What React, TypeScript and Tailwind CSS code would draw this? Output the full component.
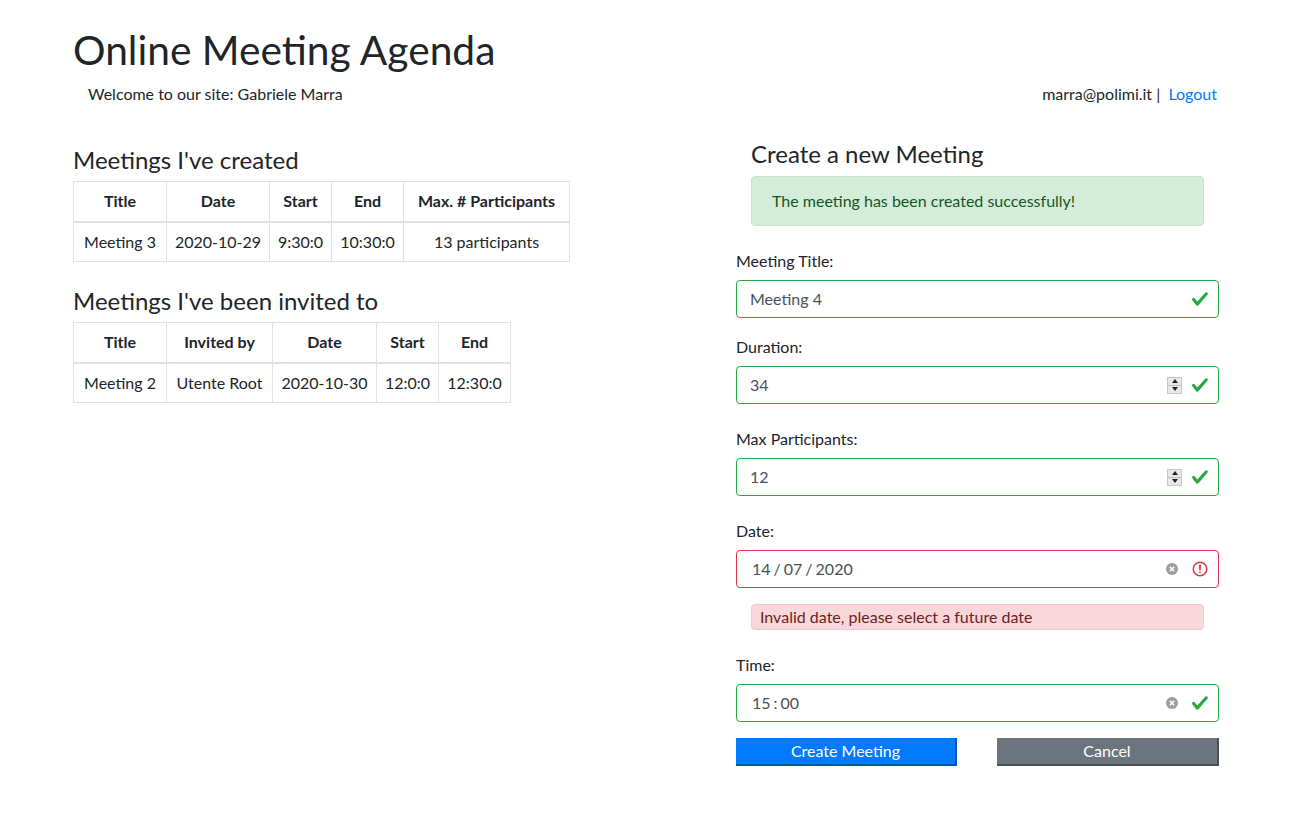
import React from 'react';

const font = { fontFamily: 'Lato, "Open Sans", sans-serif' };

function CheckIcon() {
  return (
    <svg width="18" height="18" viewBox="0 0 8 8" className="shrink-0">
      <path
        fill="#28a745"
        d="M2.3 6.73L.6 4.53c-.4-1.04.46-1.4 1.1-.8l1.1 1.4 3.4-3.8c.6-.63 1.6-.27 1.2.7l-4 4.6c-.43.5-.8.4-1.1.1z"
      />
    </svg>
  );
}

function InvalidIcon() {
  return (
    <svg width="18" height="18" viewBox="0 0 12 12" fill="none" stroke="#dc3545" className="shrink-0">
      <circle cx="6" cy="6" r="4.5" />
      <path strokeLinejoin="round" d="M5.8 3.6h.4L6 6.5z" />
      <circle cx="6" cy="8.2" r=".6" fill="#dc3545" stroke="none" />
    </svg>
  );
}

function ClearIcon() {
  return (
    <svg width="12" height="12" viewBox="0 0 12 12" className="shrink-0">
      <circle cx="6" cy="6" r="6" fill="#9e9e9e" />
      <path d="M3.8 3.8l4.4 4.4M8.2 3.8l-4.4 4.4" stroke="#fff" strokeWidth="1.6" />
    </svg>
  );
}

function Spinner() {
  return (
    <div className="flex flex-col w-[15px] h-[17px] border border-[#c8c8c8] bg-[#e8e8e8] shrink-0">
      <div className="flex-1 flex items-center justify-center border-b border-[#bdbdbd]">
        <div className="w-0 h-0 border-l-[3px] border-r-[3px] border-b-[4px] border-l-transparent border-r-transparent border-b-[#222]" />
      </div>
      <div className="flex-1 flex items-center justify-center">
        <div className="w-0 h-0 border-l-[3px] border-r-[3px] border-t-[4px] border-l-transparent border-r-transparent border-t-[#222]" />
      </div>
    </div>
  );
}

type FieldProps = {
  label: string;
  value: React.ReactNode;
  invalid?: boolean;
  spinner?: boolean;
  clear?: boolean;
  textPad?: string;
  mt: string;
};

function Field({ label, value, invalid, spinner, clear, textPad = 'pl-[13px]', mt }: FieldProps) {
  return (
    <div className={mt}>
      <label className="block text-base leading-6 text-[#212529]">{label}</label>
      <div
        className={`mt-[7px] h-[38px] rounded border flex items-center pr-[9px] ${textPad} ${
          invalid ? 'border-[#dc3545]' : 'border-[#28a745]'
        }`}
      >
        <div className="flex-1 flex text-base text-[#495057]">{value}</div>
        {spinner && (
          <div className="mr-[9px]">
            <Spinner />
          </div>
        )}
        {clear && (
          <div className="mr-[13px]">
            <ClearIcon />
          </div>
        )}
        {invalid ? <InvalidIcon /> : <CheckIcon />}
      </div>
    </div>
  );
}

// date / time inputs show their segments with tight separators
function Segments({ parts }: { parts: string[] }) {
  return (
    <div className="flex gap-[1px]">
      {parts.map((p, i) => (
        <span key={i} className={p === '/' || p === ':' ? 'px-[2px]' : ''}>
          {p}
        </span>
      ))}
    </div>
  );
}

const th = 'border border-[#dee2e6] border-b-2 font-bold text-center px-1 h-10 whitespace-nowrap';
const td = 'border border-[#dee2e6] text-center px-1 h-10 font-normal whitespace-nowrap';

export default function App() {
  return (
    <div className="min-h-[826px] bg-white text-[#212529]" style={font}>
      <div className="pl-[73px] pr-[88px] pt-[26px]">
        <h1 className="text-[40.7px] leading-[48px] font-normal">Online Meeting Agenda</h1>
        <div className="flex justify-between items-center mt-[8px] h-6 text-base">
          <span className="pl-[15px]">Welcome to our site: Gabriele Marra</span>
          <span className="pr-[2px]">
            marra@polimi.it |&nbsp;&nbsp;<a className="text-[#007bff]">Logout</a>
          </span>
        </div>

        <div className="flex mt-[35px]">
          {/* left column */}
          <div className="w-[663px]">
            <h4 className="text-2xl leading-[29px] mt-[4px]">Meetings I've created</h4>
            <table className="mt-[7px] border-collapse text-base">
              <thead>
                <tr>
                  <th className={`${th} w-[93px]`}>Title</th>
                  <th className={`${th} w-[103px]`}>Date</th>
                  <th className={`${th} w-[62px]`}>Start</th>
                  <th className={`${th} w-[72px]`}>End</th>
                  <th className={`${th} w-[166px]`}>Max. # Participants</th>
                </tr>
              </thead>
              <tbody>
                <tr>
                  <td className={td}>Meeting 3</td>
                  <td className={td}>2020-10-29</td>
                  <td className={td}>9:30:0</td>
                  <td className={td}>10:30:0</td>
                  <td className={td}>13 participants</td>
                </tr>
              </tbody>
            </table>

            <h4 className="text-2xl leading-[29px] mt-[24px]">Meetings I've been invited to</h4>
            <table className="mt-[7px] border-collapse text-base">
              <thead>
                <tr>
                  <th className={`${th} w-[93px]`}>Title</th>
                  <th className={`${th} w-[106px]`}>Invited by</th>
                  <th className={`${th} w-[104px]`}>Date</th>
                  <th className={`${th} w-[62px]`}>Start</th>
                  <th className={`${th} w-[72px]`}>End</th>
                </tr>
              </thead>
              <tbody>
                <tr>
                  <td className={td}>Meeting 2</td>
                  <td className={td}>Utente Root</td>
                  <td className={td}>2020-10-30</td>
                  <td className={td}>12:0:0</td>
                  <td className={td}>12:30:0</td>
                </tr>
              </tbody>
            </table>
          </div>

          {/* right column */}
          <div className="w-[483px]">
            <div className="px-[15px]">
              <h4 className="text-2xl leading-[29px] -mt-[2px]">Create a new Meeting</h4>
              <div className="mt-[8px] h-[50px] flex items-center px-5 rounded border border-[#c3e6cb] bg-[#d4edda] text-[#155724] text-base">
                The meeting has been created successfully!
              </div>
            </div>

            <Field mt="mt-[23px]" label="Meeting Title:" value="Meeting 4" />
            <Field mt="mt-[17px]" label="Duration:" value="34" spinner />
            <Field mt="mt-[23px]" label="Max Participants:" value="12" spinner />
            <Field
              mt="mt-[23px]"
              label="Date:"
              value={<Segments parts={['14', '/', '07', '/', '2020']} />}
              invalid
              clear
              textPad="pl-[15px]"
            />

            <div className="px-[15px] mt-[16px]">
              <div className="h-[26px] flex items-center px-2 rounded border border-[#f5c6cb] bg-[#f8d7da] text-[#721c24] text-base">
                Invalid date, please select a future date
              </div>
            </div>

            <Field
              mt="mt-[23px]"
              label="Time:"
              value={<Segments parts={['15', ':', '00']} />}
              clear
              textPad="pl-[15px]"
            />

            <div className="flex justify-between mt-[16px]">
              <button className="w-[221px] h-[28px] bg-[#007bff] text-white text-base border-r-2 border-b-2 border-[#0056b3]">
                Create Meeting
              </button>
              <button className="w-[222px] h-[28px] bg-[#6c757d] text-white text-base border-r-2 border-b-2 border-[#4b5157]">
                Cancel
              </button>
            </div>
          </div>
        </div>
      </div>
    </div>
  );
}
